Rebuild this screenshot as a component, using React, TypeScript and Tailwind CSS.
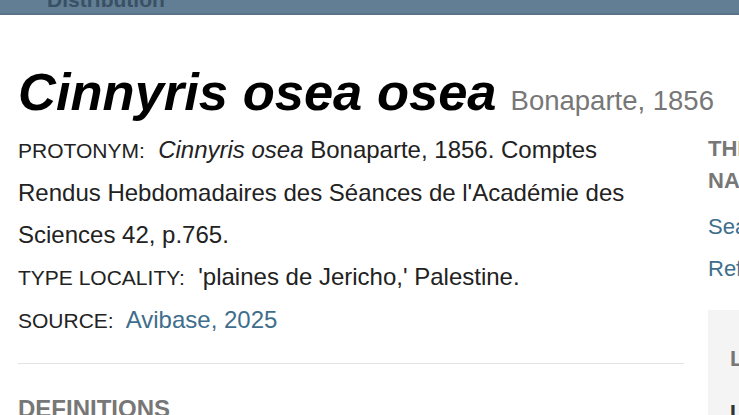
export default function App() {
  return (
    <div className="h-[415px] w-[739px] overflow-hidden bg-white font-['Liberation_Sans',Arial,sans-serif] text-[#222]">
      {/* nav bar, scrolled almost out of view */}
      <div className="h-[15px] overflow-hidden bg-[#617e94] border-b-2 border-[#58728a]">
        <div className="-mt-[11px] pl-[47px] text-[21px] font-bold leading-[21px] text-[#3a5064]">
          Distribution
        </div>
      </div>

      <div className="flex gap-[24px] pl-[18px]">
        <main className="w-[666px] shrink-0">
          <h1 className="mt-[48px] whitespace-nowrap leading-[57px]">
            <span className="text-[52.5px] font-bold italic text-black">Cinnyris osea osea</span>
            <span className="ml-[14px] text-[27.5px] text-[#777]">Bonaparte, 1856</span>
          </h1>

          <div className="-mt-[4px] w-[662px] text-[24px] leading-[42px]">
            <p>
              <span className="text-[21px] uppercase">Protonym:</span>&nbsp;{' '}
              <i>Cinnyris osea</i> Bonaparte, 1856. Comptes Rendus Hebdomadaires des Séances de
              l'Académie des Sciences 42, p.765.
            </p>
            <p>
              <span className="text-[21px] uppercase">Type locality:</span>&nbsp;{' '}
              'plaines de Jericho,' Palestine.
            </p>
            <p>
              <span className="text-[21px] uppercase">Source:</span>&nbsp;{' '}
              <a className="text-[#3e6e8c]">Avibase, 2025</a>
            </p>
          </div>

          <hr className="mt-[21px] border-t border-[#e3e3e3]" />

          <h2 className="mt-[32px] text-[24px] font-bold uppercase leading-[26px] text-[#777]">
            Definitions
          </h2>
        </main>

        <aside className="w-[260px] shrink-0 pt-[118px]">
          <h3 className="text-[22px] font-bold uppercase leading-[32px] text-[#777]">
            This taxon
            <br />
            Names
          </h3>
          <div className="mt-[9px] text-[22px] leading-[42px] text-[#3e6e8c]">
            <div>Search Avibase</div>
            <div>References</div>
          </div>
          <div className="mt-[20px] bg-[#f4f4f4] px-[22px] pt-[36px] pb-[20px]">
            <div className="text-[22px] font-bold uppercase leading-[26px] text-[#777]">Links</div>
            <div className="mt-[28px] text-[22px] font-bold leading-[26px] text-[#333]">Useful</div>
          </div>
        </aside>
      </div>
    </div>
  );
}
